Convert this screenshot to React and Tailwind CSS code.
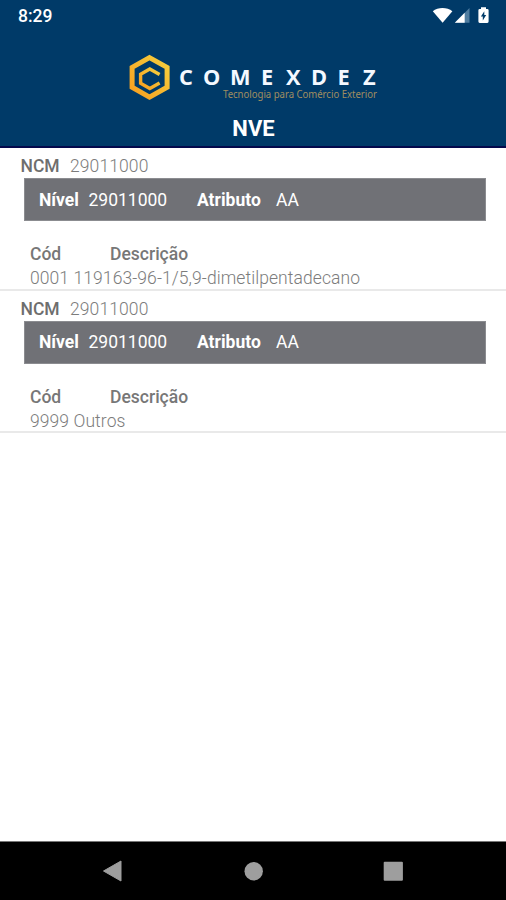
const ENTRIES = [
  { ncm: "29011000", nivel: "29011000", atributo: "AA", item: "0001 119163-96-1/5,9-dimetilpentadecano" },
  { ncm: "29011000", nivel: "29011000", atributo: "AA", item: "9999 Outros" },
];

function StatusBar() {
  return (
    <div className="flex h-8 items-center justify-between pl-[18px] pr-[14px]">
      <span className="text-[17.5px] font-medium leading-8 text-white">8:29</span>
      <svg className="h-8 w-[60px]" viewBox="0 0 60 32" fill="#fff">
        <path d="M.8 11.3C6 6.9 15 6.9 20.4 11.3L10.6 22.7Z" />
        <path d="M37.5 8V22.7H22.8Z" fill="#4f7da0" />
        <path d="M32.7 12.8V22.7H22.8Z" />
        <path d="M49 7.2h5v1.7h1.3q1.3 0 1.3 1.3v11.4q0 1.3-1.3 1.3h-7.6q-1.3 0-1.3-1.3V10.2q0-1.3 1.3-1.3H49Z" />
        <path d="M52.3 11.2v3.8h1.900l-3.400 5.500v-4h-1.900Z" fill="#003a68" />
      </svg>
    </div>
  );
}

function Logo() {
  return (
    <svg className="ml-[128px] block h-[60px] w-[254px] shrink-0" viewBox="128 50 254 60">
      <defs>
        <linearGradient id="gold" x1="0" y1="1" x2="1" y2="0">
          <stop offset="0" stopColor="#f79e1f" />
          <stop offset="1" stopColor="#f5cf3e" />
        </linearGradient>
      </defs>
      <path d="M149.5 57.6L167.1 67.4V87.2L149.5 97.2L132.1 87.2V67.4Z" fill="none" stroke="url(#gold)" strokeWidth="5" />
      <path d="M159.6 74.4L149.8 69L140.6 74.2V83.3L149.8 88.5L159.6 83.1" fill="none" stroke="url(#gold)" strokeWidth="3.4" />
      <text
        x="179 203 230 261 286 311 337.5 363"
        y="85"
        fill="#f4f8ff"
        fontFamily="'Open Sans', sans-serif"
        fontWeight="700"
        fontSize="21.8"
      >
        COMEXDEZ
      </text>
      <text
        x="223"
        y="97.5"
        textLength="154"
        lengthAdjust="spacingAndGlyphs"
        fill="#a18e60"
        fontFamily="'Noto Sans', sans-serif"
        fontSize="10.2"
      >
        Tecnologia para Comércio Exterior
      </text>
    </svg>
  );
}

function Entry({ ncm, nivel, atributo, item }) {
  return (
    <section className="h-[142.5px] border-b-2 border-[#e9e9e9] pt-[7px] text-[17.5px] leading-[22px] text-[#7c7c7c]">
      <div className="flex h-[23px] pl-[20.5px]">
        <span className="w-[49.5px] font-medium text-[#6e6e6e]">NCM</span>
        <span className="font-light tracking-[0.1px]">{ncm}</span>
      </div>
      <div className="ml-[24px] mr-[20px] flex h-[43px] items-center border border-[#8b8c90] bg-[#707176] pl-[14px] text-white">
        <span className="w-[49.5px] font-bold">Nível</span>
        <span className="w-[108.5px]">{nivel}</span>
        <span className="w-[79px] font-bold">Atributo</span>
        <span>{atributo}</span>
      </div>
      <div className="flex pl-[30px] pt-[22px] font-medium text-[#777]">
        <span className="w-[80px]">Cód</span>
        <span>Descrição</span>
      </div>
      <p className="mt-[2px] whitespace-nowrap pl-[30px] font-light tracking-[0.08px]">{item}</p>
    </section>
  );
}

export default function App() {
  return (
    <div className="flex h-[900px] w-[506px] flex-col overflow-hidden bg-white font-['Roboto',sans-serif]">
      <header className="flex h-[148px] shrink-0 flex-col border-b-2 border-[#04094c] bg-[#003a68]">
        <StatusBar />
        <div className="pt-[18px]">
          <Logo />
        </div>
        <h1 className="pl-[1px] pt-[5px] text-center text-[22px] font-bold leading-[28px] text-white">NVE</h1>
      </header>
      <main className="grow">
        {ENTRIES.map((entry) => (
          <Entry key={entry.item} {...entry} />
        ))}
      </main>
      <nav className="h-[59px] shrink-0 border-t border-[#777] bg-black">
        <svg className="block h-[58px] w-[506px]" viewBox="0 842 506 58" fill="#9e9e9e">
          <path d="M121 861V881L103.5 871Z" stroke="#9e9e9e" strokeLinejoin="round" />
          <circle cx="253.7" cy="871.2" r="9.2" />
          <rect x="383.7" y="861.8" width="19.2" height="19" rx="1" />
        </svg>
      </nav>
    </div>
  );
}
